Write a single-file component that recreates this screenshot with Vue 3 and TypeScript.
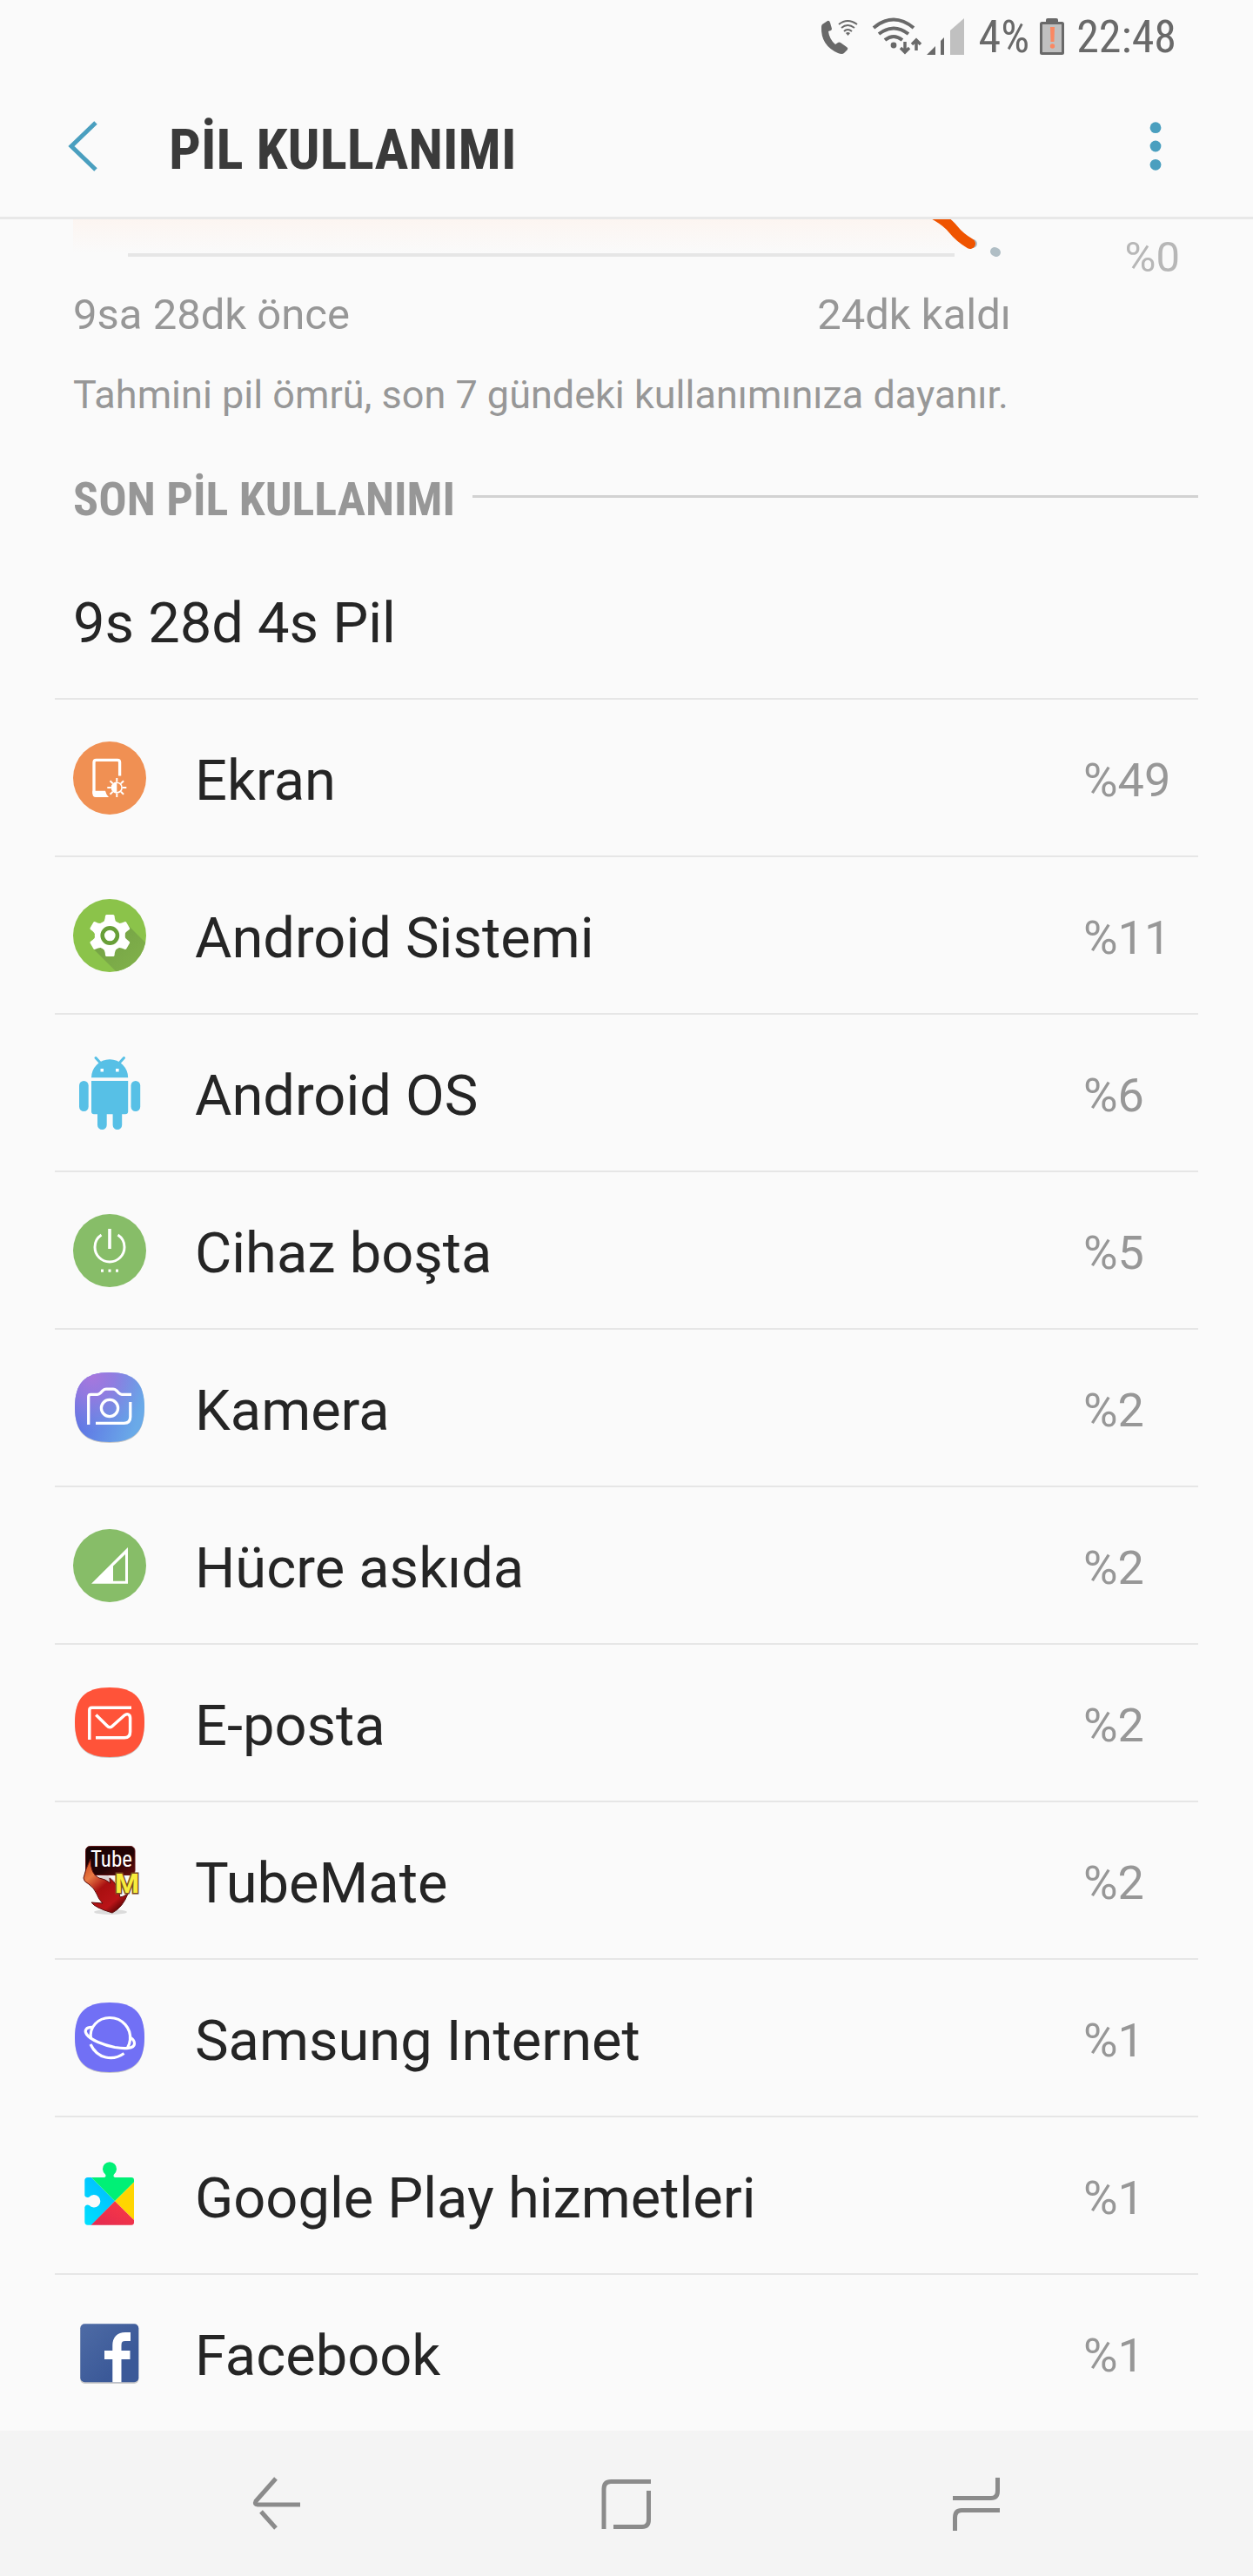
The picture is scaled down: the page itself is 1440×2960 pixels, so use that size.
<script setup lang="ts">
interface UsageItem {
  id: string
  name: string
  percent: number
}

const items: UsageItem[] = [
  { id: 'display', name: 'Ekran', percent: 49 },
  { id: 'system', name: 'Android Sistemi', percent: 11 },
  { id: 'os', name: 'Android OS', percent: 6 },
  { id: 'idle', name: 'Cihaz boşta', percent: 5 },
  { id: 'camera', name: 'Kamera', percent: 2 },
  { id: 'cell', name: 'Hücre askıda', percent: 2 },
  { id: 'mail', name: 'E-posta', percent: 2 },
  { id: 'tubemate', name: 'TubeMate', percent: 2 },
  { id: 'browser', name: 'Samsung Internet', percent: 1 },
  { id: 'play', name: 'Google Play hizmetleri', percent: 1 },
  { id: 'facebook', name: 'Facebook', percent: 1 },
]

const squircle = 'M42 1C70 1 82 13 82 41S70 81 42 81 2 69 2 41 14 1 42 1Z'
const toothAngles = [0, 60, 120, 180, 240, 300]
const rayAngles = [0, 45, 90, 135, 180, 225, 270, 315]
</script>

<template>
  <div class="screen">
    <div class="status">
      <svg class="call" width="46" height="42" viewBox="0 0 46 42" aria-hidden="true">
        <path d="M2 7L8 3Q10 2 11 5L13 12Q13 13 12 14L9 15Q10 24 17 30L20 28Q21 27 23 28L30 33Q32 34 31 36L27 40Q25 42 20 40Q0 31 1 10Q1 8 2 7Z" fill="#696969" />
        <g fill="none" stroke="#696969" stroke-width="2">
          <path d="M21 7Q31 -1 42 7" /><path d="M24 11Q31 5 39 11" /><path d="M27 15Q31 11 36 15" />
        </g>
        <path d="M29 17Q31 15 34 17L31.500 20Z" fill="#696969" />
      </svg>
      <svg class="wifi" width="58" height="44" viewBox="0 0 58 44" aria-hidden="true">
        <g fill="none" stroke="#696969" stroke-width="4">
          <path d="M2 12Q25 -7 48 12" /><path d="M8 19Q25 6 42 19" /><path d="M15 26Q25 18 35 26" />
        </g>
        <circle cx="25" cy="32" r="3.400" fill="#696969" />
        <path d="M38 28V40M33 35L38 40L43 35M51 38V25M46 31L51 26L56 31" fill="none" stroke="#696969" stroke-width="3.500" />
      </svg>
      <svg class="signal" width="44" height="44" viewBox="0 0 44 44" aria-hidden="true">
        <path d="M0 43L10 33V43ZM16 43V27L20 23V43Z" fill="#696969" />
        <path d="M27 43V15L43 1V43Z" fill="#c0c0c0" />
      </svg>
      <span class="level">4%</span>
      <svg class="battery" width="28" height="44" viewBox="0 0 28 44" aria-hidden="true">
        <path d="M7 5V3Q7 1 9 1H19Q21 1 21 3V5Z" fill="#696969" />
        <rect x="1.500" y="6.500" width="25" height="35" rx="1" fill="#c0c0c0" stroke="#696969" stroke-width="3" />
        <path d="M12 11H17L16.500 28H12.500Z" fill="#fa8862" />
        <circle cx="14.500" cy="33" r="2.700" fill="#fa8862" />
      </svg>
      <time>22:48</time>
    </div>

    <header class="bar">
      <button class="back" type="button" aria-label="Geri">
        <svg width="36" height="58" viewBox="0 0 36 58"><path d="M34 2L6 29L34 56" fill="none" stroke="#4a9fbf" stroke-width="5" /></svg>
      </button>
      <h1>PİL KULLANIMI</h1>
      <button class="more" type="button" aria-label="Diğer seçenekler">
        <svg width="14" height="58" viewBox="0 0 14 58" fill="#4a9fbf">
          <circle cx="7" cy="7.700" r="6.400" /><circle cx="7" cy="29" r="6.400" /><circle cx="7" cy="50.300" r="6.400" />
        </svg>
      </button>
    </header>

    <main>
      <section class="graph">
        <div class="plot">
          <svg width="1076" height="46" viewBox="0 0 1076 46" aria-hidden="true">
            <defs>
              <linearGradient id="fade" x1="0" y1="0" x2="0" y2="1">
                <stop offset="0" stop-color="#fcf5f1" /><stop offset="1" stop-color="#fafafa" />
              </linearGradient>
            </defs>
            <path d="M0 0H1000L1030 38H0Z" fill="url(#fade)" />
            <path d="M63 41H1013" stroke="#e6e6e6" stroke-width="4" />
            <circle cx="1034" cy="28" r="5" fill="#b0bec5" />
            <path d="M985 -8Q1003 1 1011 11T1031 28" fill="none" stroke="#ef5400" stroke-width="12" stroke-linecap="round" />
            <path d="M1059 37L1061 38" stroke="#b0bec5" stroke-width="10" stroke-linecap="round" />
          </svg>
          <span class="zero">%0</span>
        </div>
        <div class="range"><span>9sa 28dk önce</span><span>24dk kaldı</span></div>
        <p class="note">Tahmini pil ömrü, son 7 gündeki kullanımınıza dayanır.</p>
      </section>

      <section>
        <div class="heading"><h2>SON PİL KULLANIMI</h2></div>
        <p class="total">9s 28d 4s Pil</p>
        <ul class="list">
          <li v-for="item in items" :key="item.id">
            <a class="row" :href="'#' + item.id">
              <svg class="icon" width="84" height="84" viewBox="0 0 84 84" aria-hidden="true">
                <template v-if="item.id === 'display'">
                  <circle cx="42" cy="42" r="42" fill="#f09053" />
                  <path d="M53.600 39.500V24Q53.600 21.400 51 21.400H26.500Q24 21.400 24 24V60" fill="none" stroke="#fff" stroke-width="3.300" />
                  <path d="M22.400 56.700H37Q38 61 41 64H26Q22.400 64 22.400 60Z" fill="#fff" />
                  <circle cx="50.300" cy="53" r="5.800" fill="none" stroke="#fff" stroke-width="1.600" />
                  <path d="M50.300 46.500A6.500 6.500 0 0 0 50.300 59.500Z" fill="#fff" />
                  <path v-for="a in rayAngles" :key="a" d="M50.300 46.500V42" :transform="`rotate(${a} 50.300 53)`" stroke="#fff" stroke-width="2" />
                </template>
                <template v-else-if="item.id === 'system'">
                  <defs>
                    <clipPath id="disc"><circle cx="42" cy="42" r="42" /></clipPath>
                    <linearGradient id="shade" x1="0.200" y1="0.200" x2="0.900" y2="0.900">
                      <stop offset="0" stop-color="#76a446" /><stop offset="1" stop-color="#84b54c" />
                    </linearGradient>
                  </defs>
                  <circle cx="42" cy="42" r="42" fill="#8bc34a" />
                  <path d="M64 31L96 63V96H62L24 58Z" fill="url(#shade)" clip-path="url(#disc)" />
                  <g fill="#fff">
                    <circle cx="42.300" cy="42" r="17.500" />
                    <path v-for="a in toothAngles" :key="a" d="M34 27Q36.500 26 37 19.500Q37.200 18 38.500 18H46Q47.400 18 47.600 19.500Q48 26 50.500 27Z" :transform="`rotate(${a} 42.300 42)`" />
                  </g>
                  <circle cx="42.300" cy="42" r="8.600" fill="#fff" stroke="#689f38" stroke-width="4.600" />
                </template>
                <g v-else-if="item.id === 'os'" fill="#57c0e6">
                  <path d="M21 24.300A21 21 0 0 1 63.200 24.300ZM21 28H63.200V63.300Q63.200 66.300 60 66.300H24Q21 66.300 21 63.300Z" />
                  <path d="M26 1.500L31 7M58.500 1.500L53.500 7" stroke="#57c0e6" stroke-width="3" stroke-linecap="round" />
                  <rect x="7" y="28" width="10.700" height="35" rx="5.300" /><rect x="66.500" y="28" width="10.700" height="35" rx="5.300" />
                  <path d="M28 64H38.700V78.700A5.300 5.300 0 0 1 28 78.700ZM45.600 64H56.200V78.700A5.300 5.300 0 0 1 45.600 78.700Z" />
                  <path d="M31.500 14H35V17.600H31.500ZM49 14H52.600V17.600H49Z" fill="#fff" />
                </g>
                <template v-else-if="item.id === 'idle'">
                  <circle cx="42" cy="42" r="42" fill="#87bd68" />
                  <path d="M42 17V40" stroke="#fff" stroke-width="3.600" />
                  <path d="M32.500 24Q25 29 25 38A17 17 0 0 0 59 38Q59 29 51.500 24" fill="none" stroke="#fff" stroke-width="3" />
                  <path d="M32 63.500H35V66.700H32ZM40.500 63.500H43.500V66.700H40.500ZM49 63.500H52V66.700H49Z" fill="#fff" />
                </template>
                <template v-else-if="item.id === 'camera'">
                  <defs>
                    <linearGradient id="lens" x1="0" y1="0.400" x2="0.900" y2="0.700">
                      <stop offset="0" stop-color="#5c69e4" /><stop offset="1" stop-color="#6aaae8" />
                    </linearGradient>
                    <radialGradient id="glow" cx="0.250" cy="0.050" r="0.800">
                      <stop offset="0" stop-color="#a877dd" /><stop offset="0.400" stop-color="#9b7bdf" stop-opacity="0.800" /><stop offset="1" stop-color="#8f8fe0" stop-opacity="0" />
                    </radialGradient>
                  </defs>
                  <path :d="squircle" fill="#000" opacity="0.200" transform="translate(0 1)" />
                  <path :d="squircle" fill="url(#lens)" /><path :d="squircle" fill="url(#glow)" />
                  <g fill="none" stroke="#fff" stroke-width="3.300">
                    <path d="M17.700 61V29Q17.700 26.300 20.500 26.300H28Q30 26.300 31.500 24.700L34 22Q36 20.200 38 20.200H46Q48 20.200 50 22L52.500 24.700Q54 26.300 56 26.300H67" />
                    <path d="M65.800 35V52Q65.800 59.300 58.500 59.300H26" /><circle cx="42" cy="42" r="9.600" />
                  </g>
                </template>
                <template v-else-if="item.id === 'cell'">
                  <circle cx="42" cy="42" r="42" fill="#87bd68" />
                  <path d="M21 62.700L63 21V62.700ZM46 42.500V59.700H60V29Z" fill="#fff" fill-rule="evenodd" />
                </template>
                <template v-else-if="item.id === 'mail'">
                  <path :d="squircle" fill="#000" opacity="0.200" transform="translate(0 1)" />
                  <path :d="squircle" fill="#ff5339" />
                  <g fill="none" stroke="#fff" stroke-width="3.500">
                    <path d="M18.800 61V27Q18.800 24.200 21.500 24.200H67" />
                    <path d="M26.300 32.500L39 45Q42.300 48.500 45.600 45L59 33Q61.500 31 63.500 32Q65.600 33 65.600 36V52Q65.600 58.800 59 58.800H26" />
                  </g>
                </template>
                <template v-else-if="item.id === 'tubemate'">
                  <defs>
                    <linearGradient id="screenfill" x1="0" y1="0" x2="1" y2="1">
                      <stop offset="0" stop-color="#170203" /><stop offset="0.600" stop-color="#250405" /><stop offset="1" stop-color="#6b0d0d" />
                    </linearGradient>
                    <linearGradient id="flame" x1="0" y1="0" x2="0.700" y2="1">
                      <stop offset="0" stop-color="#c63c10" /><stop offset="0.300" stop-color="#e87a45" /><stop offset="0.550" stop-color="#a90f10" /><stop offset="0.850" stop-color="#b91418" /><stop offset="1" stop-color="#650506" />
                    </linearGradient>
                  </defs>
                  <ellipse cx="43" cy="78" rx="19" ry="3" fill="#000" opacity="0.120" />
                  <rect x="14.500" y="2.500" width="56.500" height="33" rx="5" fill="url(#screenfill)" stroke="#651719" />
                  <path d="M30 37L40 36L48 42V54L36 46Z" fill="#ddd3d3" />
                  <text class="tube" x="20" y="26">Tube</text>
                  <path d="M20 17Q14 29 12 39Q12 43 18 46Q24 50 27 57Q29 63 34 68L21 67Q25 73 45 79Q57 73 63 57Q57 61 54 61Q52 46 42 39Q42 43 43 45Q37 40 30 39Q20 35 20 17Z" fill="url(#flame)" stroke="#5b1010" />
                  <text class="mate" x="48" y="56">M</text>
                </template>
                <template v-else-if="item.id === 'browser'">
                  <path :d="squircle" fill="#000" opacity="0.200" transform="translate(0 1)" />
                  <path :d="squircle" fill="#7170f5" />
                  <g fill="none" stroke="#fff" stroke-width="3.200">
                    <path d="M20.500 43C18 29 29 18.500 42 18.500C57 18.500 67 31 65.500 44Q65 49 62.500 53" />
                    <path d="M22.500 29.500C15 29 12.500 33 15.500 37.500C20 44 35 50 48 52.500C60 54.500 70 54 70.500 48.500Q71 44.500 65 40.500" />
                    <path d="M20 49C28 66 46 68.500 58.500 59.500" />
                  </g>
                </template>
                <template v-else-if="item.id === 'play'">
                  <defs>
                    <clipPath id="piece">
                      <path d="M17 21H36Q38.500 20 37 17.500A8 8 0 1 1 47 17.500Q45.500 20 48 21H67Q70 21 70 24V72.700Q70 75.700 67 75.700H17Q13.300 75.700 13.300 72V55Q15 51.500 18.500 53A7.300 7.300 0 1 0 18.500 43.500Q15 45 13.300 42V24.500Q13.300 21 17 21Z" />
                    </clipPath>
                    <linearGradient id="cyan" x1="0.800" y1="0" x2="0.300" y2="1"><stop offset="0" stop-color="#00b8ff" /><stop offset="1" stop-color="#00e0ff" /></linearGradient>
                    <linearGradient id="red" x1="1" y1="0" x2="0" y2="1"><stop offset="0" stop-color="#ff3c42" /><stop offset="1" stop-color="#dc2654" /></linearGradient>
                  </defs>
                  <g clip-path="url(#piece)">
                    <path d="M13 13L48 48.300L13 84Z" fill="url(#cyan)" />
                    <path d="M0 0H84V12.700L48 48.300Z" fill="#00f076" />
                    <path d="M84 12.700L48 48.300L84 84Z" fill="#ffd500" />
                    <path d="M48 48.300L84 84H12.500Z" fill="url(#red)" />
                  </g>
                </template>
                <template v-else>
                  <defs>
                    <linearGradient id="navy" x1="0" y1="0" x2="1" y2="1"><stop offset="0" stop-color="#4e6ba5" /><stop offset="0.700" stop-color="#3b5998" /></linearGradient>
                  </defs>
                  <rect x="8.300" y="10" width="67" height="67" rx="5" fill="#000" opacity="0.200" />
                  <rect x="8.300" y="8.300" width="67" height="67" rx="5" fill="url(#navy)" />
                  <path d="M50.400 75.300V33Q50.400 23 60 23H66M36 44H65.500" fill="none" stroke="#fff" stroke-width="10.200" />
                </template>
              </svg>
              <span class="name">{{ item.name }}</span>
              <span class="percent">%{{ item.percent }}</span>
            </a>
          </li>
        </ul>
      </section>
    </main>

    <nav class="keys" aria-label="Gezinme">
      <button type="button" aria-label="Geri">
        <svg width="62" height="62" viewBox="0 0 62 62"><path d="M30 2L7 28Q5 32 9 32H58M13 40L30 59" /></svg>
      </button>
      <button type="button" aria-label="Ana ekran">
        <svg width="62" height="62" viewBox="0 0 62 62"><path d="M5 60V14Q5 5.500 13 5.500H59M56.500 16V49Q56.500 57.500 49 57.500H16" /></svg>
      </button>
      <button type="button" aria-label="Son uygulamalar">
        <svg width="62" height="62" viewBox="0 0 62 62"><path d="M55.500 1V16Q55.500 24.500 48 24.500H4M6.500 62V47Q6.500 38.500 14 38.500H58" /></svg>
      </button>
    </nav>
  </div>
</template>

<style>
body {
  background: #fafafa;
}
</style>

<style scoped>
.screen {
  display: flex;
  flex-direction: column;
  min-height: 100vh;
  background: #fafafa;
  color: #252525;
  font-family: Roboto, "Noto Sans", sans-serif;
}
h1, h2, p, ul {
  margin: 0;
  padding: 0;
}
svg {
  display: block;
  flex: none;
}
button {
  padding: 0;
  border: 0;
  background: none;
}
.status {
  display: flex;
  align-items: center;
  justify-content: flex-end;
  height: 84px;
  padding-right: 88px;
  color: #696969;
  font: 52px/60px "Roboto Condensed", Roboto, sans-serif;
}
.level,
time {
  padding-top: 2px;
}
.call {
  margin-right: 13px;
}
.wifi {
  margin-right: 5px;
}
.signal {
  margin-right: 16px;
}
.battery {
  margin: 0 14px 0 12px;
}
.bar {
  display: flex;
  align-items: center;
  height: 162px;
  padding: 3px 105px 0 76px;
  border-bottom: 3px solid #e8e8e8;
}
h1 {
  flex: 1;
  padding: 8px 0 0 82px;
  color: #3a3a3a;
  font: bold 65px/80px "Roboto Condensed", Roboto, sans-serif;
}
.plot {
  display: flex;
  height: 80px;
  padding-left: 84px;
}
.zero {
  flex: 1;
  padding: 14px 84px 0 0;
  color: #b7b7b7;
  font-size: 49px;
  line-height: 60px;
  text-align: right;
}
.range {
  display: flex;
  justify-content: space-between;
  padding: 0 278px 0 84px;
  color: #979797;
  font-size: 49px;
  line-height: 60px;
}
.note {
  padding: 32px 84px 58px;
  color: #979797;
  font-size: 45px;
  line-height: 60px;
}
.heading {
  display: flex;
  align-items: center;
  gap: 20px;
  padding: 0 63px 0 84px;
}
.heading::after {
  flex: 1;
  height: 3px;
  margin-bottom: 8px;
  background: #d2d2d2;
  content: "";
}
h2 {
  color: #979797;
  font: bold 54px/64px "Roboto Condensed", Roboto, sans-serif;
}
.total {
  padding: 70px 84px 46px;
  font-size: 65px;
  line-height: 80px;
}
.list {
  margin: 0 63px;
  list-style: none;
}
.row {
  display: flex;
  align-items: center;
  height: 179px;
  padding-left: 21px;
  border-top: 2px solid #e6e6e6;
  color: inherit;
  text-decoration: none;
}
.name {
  flex: 1;
  padding: 6px 0 0 56px;
  font-size: 65px;
  line-height: 80px;
}
.percent {
  width: 132px;
  padding-top: 6px;
  color: #979797;
  font-size: 54px;
  line-height: 80px;
}
.icon {
  overflow: visible;
}
.tube {
  fill: #fff;
  font: 25px "Roboto Condensed", Roboto, sans-serif;
}
.mate {
  fill: #f7ec3c;
  stroke: #7c4a20;
  stroke-width: 3px;
  paint-order: stroke;
  font: bold 32px Roboto, sans-serif;
}
.keys {
  display: flex;
  height: 167px;
  margin-top: auto;
  padding: 0 117px;
  background: #f4f4f4;
}
.keys button {
  display: flex;
  flex: 1;
  align-items: center;
  justify-content: center;
}
.keys path {
  fill: none;
  stroke: #8b8b8b;
  stroke-width: 5px;
}
</style>
